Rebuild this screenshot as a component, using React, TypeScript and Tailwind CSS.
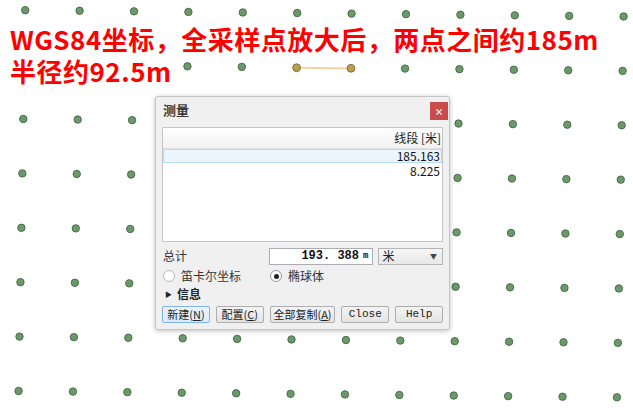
import React from "react";

const cjk = "'Noto Sans CJK SC', 'Noto Sans', sans-serif";

function Dots() {
  const dots: { x: number; y: number; key: string }[] = [];
  for (let j = -1; j <= 6; j++) {
    for (let i = 0; i <= 11; i++) {
      if (j === 0 && i <= 2) continue;
      if (j === 0 && (i === 5 || i === 6)) continue;
      const x = 23.3 + 54.4 * i - 0.95 * (j - 1);
      const y = 119 + 0.57 * i + 54.4 * (j - 1);
      dots.push({ x, y, key: `${i}-${j}` });
    }
  }
  return (
    <svg className="absolute inset-0" width={633} height={418} viewBox="0 0 633 418">
      <line x1={297} y1={67.8} x2={351} y2={68.4} stroke="#f3d3a3" strokeWidth={2} />
      {dots.map((d) => (
        <circle key={d.key} cx={d.x} cy={d.y} r={3.7} fill="#6b9a6a" stroke="#4e6b4d" strokeWidth={1} />
      ))}
      <circle cx={296.6} cy={67.7} r={3.9} fill="#c39c4a" stroke="#6f7a4e" strokeWidth={1} />
      <circle cx={351} cy={68.3} r={3.9} fill="#c39c4a" stroke="#7a6f55" strokeWidth={1} />
    </svg>
  );
}

function Btn({ children, primary, mono }: { children: React.ReactNode; primary?: boolean; mono?: boolean }) {
  return (
    <div
      className={
        "h-[17px] flex items-center justify-center rounded-[2px] border text-[11px] text-[#222] leading-[15px] " +
        (primary
          ? "border-[#7eb4ea] bg-gradient-to-b from-[#ecf4fc] to-[#dcecfc]"
          : "border-[#adadad] bg-gradient-to-b from-[#f4f4f4] to-[#e4e4e4]")
      }
      style={{ fontFamily: mono ? "'Liberation Mono', monospace" : cjk }}
    >
      {children}
    </div>
  );
}

export default function App() {
  return (
    <div className="relative w-[633px] h-[418px] bg-white overflow-hidden">
      <Dots />
      <div
        className="absolute left-[10px] top-[23px] text-[#ff0000] font-bold text-[26px] leading-[32px] tracking-[0.5px]"
        style={{ fontFamily: cjk }}
      >
        <div>WGS84坐标，全采样点放大后，两点之间约185m</div>
        <div>半径约92.5m</div>
      </div>

      <div
        className="absolute left-[155px] top-[96px] w-[295px] h-[234px] rounded-[3px] border border-[#c4c4c4] bg-[#f0f0f0] shadow-[0_1px_5px_rgba(0,0,0,0.25)] flex flex-col"
        style={{ fontFamily: cjk }}
      >
        <div className="h-[30px] flex items-start justify-between pl-[7px] pr-[1px] pt-[5px]">
          <div className="text-[13px] font-bold text-[#3a3a3a] leading-[16px]">测量</div>
          <div className="w-[18px] h-[18px] bg-[#c94b4b] flex items-center justify-center text-white text-[9px] font-bold leading-none">
            ×
          </div>
        </div>
        <div className="mx-[6px] h-[115px] border border-[#c5c5c5] bg-white flex flex-col">
          <div className="h-[21px] shrink-0 bg-gradient-to-b from-[#ffffff] to-[#f1f1f1] border-b border-[#e2e2e2] flex items-center justify-end pr-[1px] text-[12px] text-[#222] leading-[16px]">
            线段 [米]
          </div>
          <div className="h-[14px] shrink-0 bg-[#eaf5fd] border border-[#b9dcf5] flex items-center justify-end pr-[1px] text-[12px] text-[#111] leading-[12px]">
            185.163
          </div>
          <div className="h-[16px] shrink-0 flex items-center justify-end pr-[2px] text-[12px] text-[#111] leading-[14px]">
            8.225
          </div>
        </div>
        <div className="h-[18px] mt-[5px] flex items-center pl-[7px] pr-[6px]">
          <div className="w-[107px] text-[12px] text-[#333] leading-[14px]">总计</div>
          <div
            className="w-[105px] h-[17px] bg-white border border-[#abadb3] flex items-center justify-end pr-[4px] text-[12px] text-[#111] leading-[14px] font-bold"
            style={{ fontFamily: "'Liberation Mono', monospace" }}
          >
            193. 388 <span className="text-[9px] ml-[4px]">m</span>
          </div>
          <div className="ml-[5px] w-[65px] h-[17px] border border-[#b5b5b5] bg-gradient-to-b from-[#f6f6f6] to-[#e8e8e8] flex items-center justify-between pl-[3px] pr-[5px] text-[12px] text-[#222] leading-[14px]">
            <span>米</span>
            <span className="text-[7px] text-[#444]">▼</span>
          </div>
        </div>
        <div className="h-[22px] flex items-center pl-[7px] text-[12px] text-[#333] leading-[14px]">
          <div className="w-[12px] h-[12px] rounded-full border border-[#b5b5b5] bg-white" />
          <div className="ml-[6px] w-[89px]">笛卡尔坐标</div>
          <div className="w-[12px] h-[12px] rounded-full border border-[#9a9a9a] bg-white flex items-center justify-center">
            <div className="w-[5px] h-[5px] rounded-full bg-[#222]" />
          </div>
          <div className="ml-[6px]">椭球体</div>
        </div>
        <div className="h-[14px] flex items-center pl-[9px] text-[12px] font-bold text-[#222] leading-[14px]">
          <span className="text-[7px] mr-[5px]">▶</span>
          <span>信息</span>
        </div>
        <div className="mt-[5px] px-[6px] flex gap-[6px]">
          <div className="w-[48px]"><Btn primary>新建(<u>N</u>)</Btn></div>
          <div className="w-[48px]"><Btn>配置(<u>C</u>)</Btn></div>
          <div className="w-[66px]"><Btn>全部复制(<u>A</u>)</Btn></div>
          <div className="w-[48px]"><Btn mono>Close</Btn></div>
          <div className="w-[48px]"><Btn mono>Help</Btn></div>
        </div>
      </div>
    </div>
  );
}
